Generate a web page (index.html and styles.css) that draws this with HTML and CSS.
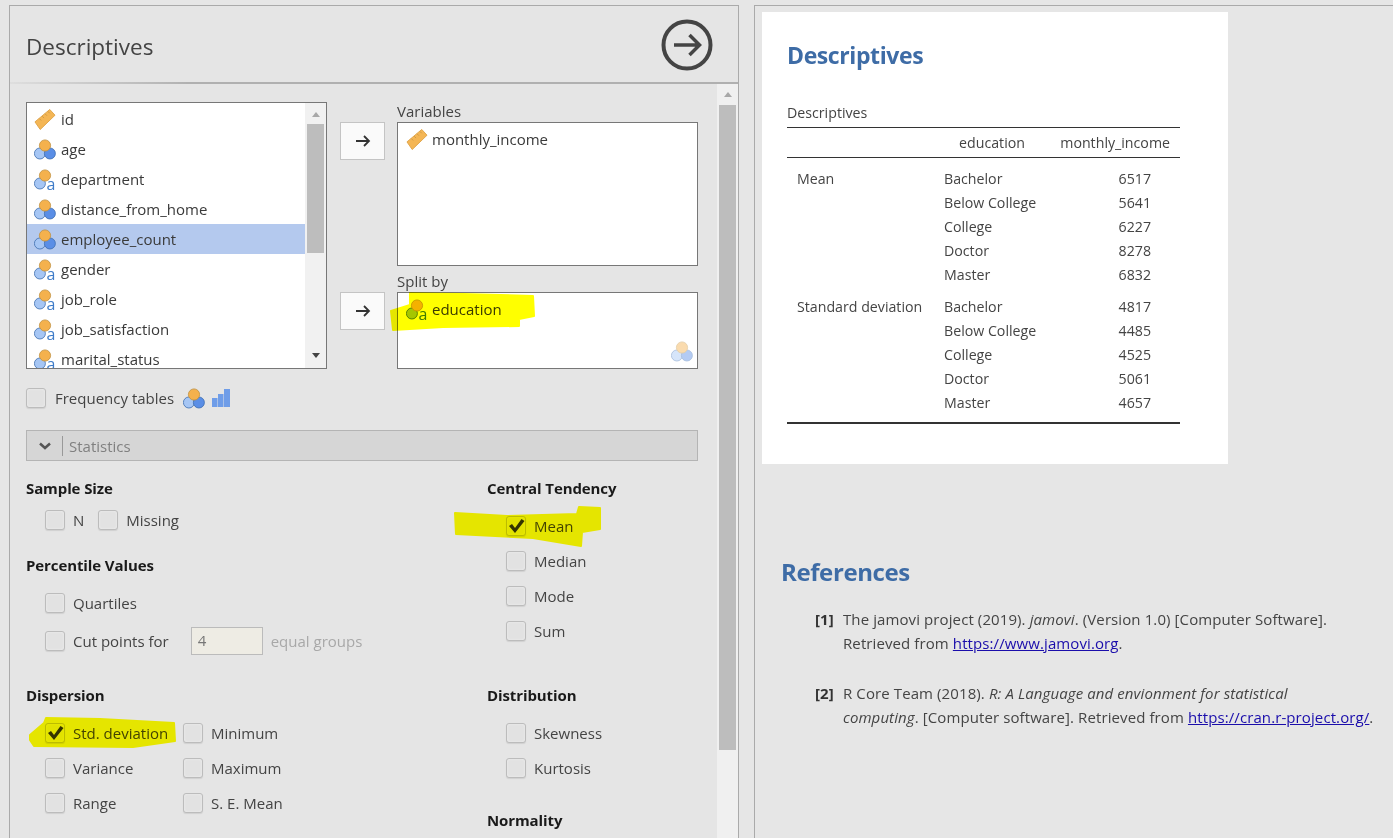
FILE: index.html
```html
<!DOCTYPE html>
<html>
<head>
<meta charset="utf-8"/>
<title>Descriptives</title>
<link rel="stylesheet" href="styles.css">
</head>
<body>

<svg class="defs" width="0" height="0">
  <symbol id="nominal" viewBox="0 0 22 20">
    <circle cx="5.900" cy="14" r="5.500" fill="#a6c6f4" stroke="#3f6fb0" stroke-width="0.800"/>
    <circle cx="15.900" cy="14" r="5.500" fill="#5a8ee6" stroke="#3f6fb0" stroke-width="0.800"/>
    <circle cx="11" cy="6" r="5.600" fill="#f4b14d" stroke="#c0913f" stroke-width="0.800"/>
  </symbol>
  <symbol id="nomtext" viewBox="0 0 22 20">
    <circle cx="5.900" cy="14" r="5.500" fill="#a6c6f4" stroke="#3f6fb0" stroke-width="0.800"/>
    <circle cx="11" cy="6" r="5.600" fill="#f4b14d" stroke="#c0913f" stroke-width="0.800"/>
    <text x="12.500" y="20" font-family="Open Sans, sans-serif" font-size="16" fill="#3f7cc8">a</text>
  </symbol>
  <symbol id="ruler" viewBox="0 0 22 22">
    <path d="M0.500 13.500 L16 0.500 L21.500 6.500 L6 21.500 Z" fill="#f4b655" stroke="#e0a549"/>
    <path d="M5 10 l2 2 M8 7.500 l2 2 M11 5 l2 2 M14 2.500 l2 2" stroke="#cf9a45" fill="none"/>
  </symbol>
  <symbol id="tick" viewBox="0 0 17 16">
    <path d="M1 8 L4 6 L7 10 L13.500 1 L16.500 3 L7 15 Z" fill="#333"/>
  </symbol>
</svg>

<div class="options">
  <div class="opt-header">
    <h1>Descriptives</h1>
    <svg class="go" width="52" height="52" viewBox="0 0 52 52">
      <circle cx="26" cy="26" r="23.500" fill="none" stroke="#444" stroke-width="4"/>
      <path d="M13 26 H38 M28.500 16 L38.500 26 L28.500 36" fill="none" stroke="#444" stroke-width="3.500"/>
    </svg>
  </div>
  <div class="opt-divider"></div>

  <div class="opt-scroll">
    <div class="opt-content">

      <div class="vars">
        <div class="listbox">
          <div class="list-items">
            <div class="item"><svg class="ico"><use href="#ruler"/></svg>id</div>
            <div class="item"><svg class="ico"><use href="#nominal"/></svg>age</div>
            <div class="item"><svg class="ico"><use href="#nomtext"/></svg>department</div>
            <div class="item"><svg class="ico"><use href="#nominal"/></svg>distance_from_home</div>
            <div class="item selected"><svg class="ico"><use href="#nominal"/></svg>employee_count</div>
            <div class="item"><svg class="ico"><use href="#nomtext"/></svg>gender</div>
            <div class="item"><svg class="ico"><use href="#nomtext"/></svg>job_role</div>
            <div class="item"><svg class="ico"><use href="#nomtext"/></svg>job_satisfaction</div>
            <div class="item"><svg class="ico"><use href="#nomtext"/></svg>marital_status</div>
          </div>
          <div class="list-bar">
            <span class="arrow-up"></span>
            <span class="list-thumb"></span>
            <span class="arrow-down"></span>
          </div>
        </div>

        <div class="targets">
          <div class="target-row target-vars">
            <button class="move"><svg width="16" height="14" viewBox="0 0 16 14"><path d="M1 7 H14 M9 2 L14 7 L9 12" fill="none" stroke="#333" stroke-width="1.800"/></svg></button>
            <div class="target-wrap">
              <div class="target-label">Variables</div>
              <div class="target-box tall">
                <div class="item"><svg class="ico"><use href="#ruler"/></svg>monthly_income</div>
              </div>
            </div>
          </div>
          <div class="target-row target-split">
            <button class="move"><svg width="16" height="14" viewBox="0 0 16 14"><path d="M1 7 H14 M9 2 L14 7 L9 12" fill="none" stroke="#333" stroke-width="1.800"/></svg></button>
            <div class="target-wrap">
              <div class="target-label">Split by</div>
              <div class="target-box short">
                <div class="item"><svg class="ico"><use href="#nomtext"/></svg>education</div>
                <svg class="ico faded"><use href="#nominal"/></svg>
              </div>
            </div>
          </div>
        </div>
      </div>

      <div class="freq">
        <span class="cb"></span>
        <span>Frequency tables</span>
        <svg class="ico freq-ico"><use href="#nominal"/></svg>
        <svg class="bars" width="18" height="18" viewBox="0 0 18 18">
          <path d="M0 9 H5.500 V18 H0 Z M6 5 H11.500 V18 H6 Z M12 0 H18 V18 H12 Z" fill="#6f9de8"/>
        </svg>
      </div>

      <div class="collapse-bar">
        <svg width="12" height="8" viewBox="0 0 12 8"><path d="M1 1.500 L6 6 L11 1.500" fill="none" stroke="#555" stroke-width="2.500"/></svg>
        <span class="collapse-sep"></span>
        <span>Statistics</span>
      </div>

      <div class="stats">
        <div class="stats-col">
          <h3>Sample Size</h3>
          <div class="row-inline sample">
            <label class="opt"><span class="cb"></span>N</label>
            <label class="opt"><span class="cb"></span>Missing</label>
          </div>

          <h3 class="percentile">Percentile Values</h3>
          <div class="opts pct-opts">
            <label class="opt"><span class="cb"></span>Quartiles</label>
            <div class="opt cut">
              <span class="cb"></span>Cut points for
              <span class="num-input">4</span>
              <span class="muted">equal groups</span>
            </div>
          </div>

          <h3 class="dispersion">Dispersion</h3>
          <div class="disp-grid">
            <label class="opt"><span class="cb"><svg class="tick"><use href="#tick"/></svg></span>Std. deviation</label>
            <label class="opt"><span class="cb"></span>Minimum</label>
            <label class="opt"><span class="cb"></span>Variance</label>
            <label class="opt"><span class="cb"></span>Maximum</label>
            <label class="opt"><span class="cb"></span>Range</label>
            <label class="opt"><span class="cb"></span>S. E. Mean</label>
          </div>
        </div>

        <div class="stats-col">
          <h3>Central Tendency</h3>
          <div class="opts">
            <label class="opt"><span class="cb"><svg class="tick"><use href="#tick"/></svg></span>Mean</label>
            <label class="opt"><span class="cb"></span>Median</label>
            <label class="opt"><span class="cb"></span>Mode</label>
            <label class="opt"><span class="cb"></span>Sum</label>
          </div>

          <h3 class="distribution">Distribution</h3>
          <div class="opts">
            <label class="opt"><span class="cb"></span>Skewness</label>
            <label class="opt"><span class="cb"></span>Kurtosis</label>
          </div>

          <h3 class="normality">Normality</h3>
        </div>
      </div>
    </div>

    <div class="main-bar">
      <span class="arrow-up"></span>
      <span class="main-thumb"></span>
    </div>
  </div>
</div>

<div class="results">
  <div class="card">
    <h1>Descriptives</h1>
    <table>
      <caption>Descriptives</caption>
      <thead>
        <tr><th class="c1"></th><th class="c2">education</th><th class="c3">monthly_income</th></tr>
      </thead>
      <tbody>
        <tr class="first"><td class="c1">Mean</td><td class="c2">Bachelor</td><td class="c3">6517</td></tr>
        <tr><td></td><td class="c2">Below College</td><td class="c3">5641</td></tr>
        <tr><td></td><td class="c2">College</td><td class="c3">6227</td></tr>
        <tr><td></td><td class="c2">Doctor</td><td class="c3">8278</td></tr>
        <tr><td></td><td class="c2">Master</td><td class="c3">6832</td></tr>
        <tr class="first"><td class="c1">Standard deviation</td><td class="c2">Bachelor</td><td class="c3">4817</td></tr>
        <tr><td></td><td class="c2">Below College</td><td class="c3">4485</td></tr>
        <tr><td></td><td class="c2">College</td><td class="c3">4525</td></tr>
        <tr><td></td><td class="c2">Doctor</td><td class="c3">5061</td></tr>
        <tr class="last"><td></td><td class="c2">Master</td><td class="c3">4657</td></tr>
      </tbody>
    </table>
  </div>

  <div class="refs">
    <h1>References</h1>
    <div class="ref">
      <b>[1]</b>
      <p>The jamovi project (2019). <i>jamovi</i>. (Version 1.0) [Computer Software]. Retrieved from <a href="#">https://www.jamovi.org</a>.</p>
    </div>
    <div class="ref">
      <b>[2]</b>
      <p>R Core Team (2018). <i>R: A Language and envionment for statistical<br>computing</i>. [Computer software]. Retrieved from <a href="#">https://cran.r-project.org/</a>.</p>
    </div>
  </div>
</div>

<!-- marker pen strokes drawn over the screenshot -->
<svg class="marker" width="1393" height="838" viewBox="0 0 1393 838">
  <path d="M391 311 L410 305 L410 293 L463 294 L533 296 L534 316 L519 319 L519 326 L443 327 L393 330 Z"/>
  <path d="M455 513 L507 516 L577 514 L579 507 L600 508 L600 529 L582 532 L581 546 L533 538 L456 534 Z"/>
  <path d="M30 735 L44 723 L46 718 L100 719 L174 723 L175 741 L133 747 L34 746 L30 740 Z"/>
</svg>

</body>
</html>
```

FILE: styles.css
```css
html, body {
  margin: 0;
  height: 100%;
  overflow: hidden;
}

body {
  display: flex;
  background-color: #e6e6e6;
  font-family: "Open Sans", "Noto Sans", sans-serif;
  font-size: 15px;
  color: #444;
}

.defs {
  position: absolute;
}

.ico {
  width: 22px;
  height: 21px;
  flex: none;
}

/* options panel */

.options {
  width: 728px;
  margin: 5px 0 0 9px;
  border: 1px solid #aaa;
  border-bottom: none;
  background-color: #e5e5e5;
  display: flex;
  flex-direction: column;
}

.opt-header {
  height: 76px;
  display: flex;
  align-items: center;
  justify-content: space-between;
  padding: 0 25px 0 16px;
  flex: none;
}

.opt-header h1 {
  margin: 4px 0 0;
  font-size: 22.500px;
  font-weight: 400;
  color: #444;
}

.go {
  margin-top: 2px;
}

.opt-divider {
  height: 2px;
  flex: none;
  background: linear-gradient(to right, #dedede, #b0b0b0 25%);
}

.opt-scroll {
  flex: 1;
  display: flex;
  min-height: 0;
}

.opt-content {
  width: 707px;
  padding: 18px 0 0 16px;
  box-sizing: border-box;
}

.main-bar {
  width: 21px;
  background-color: #f0f0f0;
  display: flex;
  flex-direction: column;
  align-items: center;
}

.main-bar .arrow-up {
  margin: 8px 0 8px;
}

.main-thumb {
  width: 17px;
  height: 645px;
  background-color: #bdbdbd;
}

.arrow-up, .arrow-down {
  width: 0;
  height: 0;
  border-left: 4px solid transparent;
  border-right: 4px solid transparent;
}

.arrow-up {
  border-bottom: 5px solid #a8a8a8;
}

.arrow-down {
  border-top: 5px solid #444;
}

/* variable supplier */

.vars {
  display: flex;
  gap: 13px;
}

.listbox {
  width: 301px;
  height: 267px;
  box-sizing: border-box;
  border: 1px solid #777;
  background-color: white;
  display: flex;
  overflow: hidden;
}

.list-items {
  width: 278px;
  padding-top: 1px;
  flex: none;
}

.item {
  height: 30px;
  display: flex;
  align-items: center;
  gap: 5px;
  padding-left: 7px;
  color: #3a3a3a;
}

.item.selected {
  background-color: #b4c9ee;
}

.list-bar {
  width: 21px;
  background-color: #f1f1f1;
  display: flex;
  flex-direction: column;
  align-items: center;
}

.list-bar .arrow-up {
  margin: 9px 0 7px;
}

.list-thumb {
  width: 17px;
  height: 129px;
  background-color: #bdbdbd;
}

.list-bar .arrow-down {
  margin-top: 100px;
}

.targets {
  display: flex;
  flex-direction: column;
}

.target-row {
  display: flex;
  gap: 12px;
}

.target-split {
  margin-top: 6px;
}

.target-label {
  height: 20px;
  line-height: 18px;
  color: #444;
}

.move {
  width: 45px;
  height: 38px;
  margin-top: 20px;
  padding: 0;
  background-color: #fafafa;
  border: 1px solid #c4c4c4;
  display: flex;
  align-items: center;
  justify-content: center;
}

.target-box {
  width: 301px;
  box-sizing: border-box;
  border: 1px solid #777;
  background-color: white;
  position: relative;
}

.target-box .item {
  padding-left: 8px;
  height: 32px;
  gap: 4px;
}

.target-box.tall {
  height: 144px;
}

.target-box.short {
  height: 77px;
}

.faded {
  position: absolute;
  right: 4px;
  bottom: 6px;
  opacity: 0.45;
}

/* frequency row */

.freq {
  display: flex;
  align-items: center;
  margin-top: 19px;
  height: 20px;
}

.freq .cb {
  margin-right: 9px;
}

.freq-ico {
  margin-left: 9px;
}

.bars {
  margin-left: 7px;
}

/* checkboxes */

.cb {
  width: 20px;
  height: 20px;
  box-sizing: border-box;
  flex: none;
  border: 1px solid #bcbcbc;
  border-radius: 3px;
  background-color: #e2e2e2;
  box-shadow: inset 0 0 2px #f4f4f4, 0 1px 1px #d0d0d0;
  display: inline-block;
  position: relative;
}

.tick {
  position: absolute;
  left: 1px;
  top: 1px;
  width: 17px;
  height: 16px;
}

.opt {
  display: flex;
  align-items: center;
  height: 20px;
  gap: 8px;
}

/* statistics */

.collapse-bar {
  margin-top: 22px;
  width: 672px;
  height: 31px;
  box-sizing: border-box;
  background-color: #d6d6d6;
  border: 1px solid #b4b4b4;
  display: flex;
  align-items: center;
  color: #808080;
  padding-left: 12px;
}

.collapse-sep {
  width: 1px;
  height: 20px;
  background-color: #999;
  margin: 0 6px 0 11px;
}

.stats {
  display: grid;
  grid-template-columns: 461px 1fr;
  padding-top: 17px;
}

h3 {
  margin: 0;
  height: 20px;
  line-height: 20px;
  font-size: 15px;
  font-weight: 700;
  letter-spacing: -0.1px;
  color: #1a1a1a;
}

.opts {
  display: flex;
  flex-direction: column;
  gap: 15px;
  padding: 18px 0 0 19px;
}

.row-inline {
  display: flex;
  padding-left: 19px;
}

.sample {
  margin-top: 12px;
  gap: 14px;
}

.percentile {
  margin-top: 25px;
}

.pct-opts {
  gap: 14px;
}

.cut {
  height: 28px;
}

.num-input {
  width: 72px;
  height: 28px;
  box-sizing: border-box;
  margin-left: 14px;
  border: 1px solid #bbb;
  background-color: #eeece4;
  color: #777;
  padding-left: 6px;
  line-height: 24px;
}

.muted {
  color: #a8a8a8;
}

.dispersion {
  margin-top: 30px;
}

.disp-grid {
  display: grid;
  grid-template-columns: 138px 1fr;
  row-gap: 15px;
  padding: 18px 0 0 19px;
}

.distribution {
  margin-top: 44px;
}

.normality {
  margin-top: 32px;
}

/* results panel */

.results {
  flex: 1;
  margin: 5px 0 0 15px;
  border: 1px solid #aaa;
  border-width: 1px 0 0 1px;
  padding: 6px 0 0 7px;
}

.results h1 {
  margin: 0;
  font-size: 23px;
  font-weight: 700;
  letter-spacing: -0.4px;
  color: #3e6ca6;
}

.card {
  width: 466px;
  height: 452px;
  box-sizing: border-box;
  background-color: white;
  padding: 26px 0 0 25px;
}

.card h1 {
  line-height: 34px;
}

table {
  width: 393px;
  margin-top: 28px;
  border-collapse: collapse;
  table-layout: fixed;
  font-size: 14.200px;
  color: #444;
}

caption {
  text-align: left;
  height: 27px;
  line-height: 26px;
}

th {
  font-weight: 400;
  height: 29px;
  padding: 0;
  border-top: 1px solid #333;
  border-bottom: 1px solid #333;
}

td {
  height: 24px;
  padding: 0;
}

.c1 {
  width: 147px;
  padding-left: 10px;
  box-sizing: border-box;
}

th.c1 {
  padding: 0;
}

.c2 {
  width: 116px;
  padding-left: 10px;
  box-sizing: border-box;
  text-align: left;
}

th.c2 {
  padding: 0;
  text-align: center;
}

.c3 {
  text-align: right;
  padding-right: 29px;
}

th.c3 {
  padding-right: 10px;
}

tr.first td {
  padding-top: 8px;
}

tr.last td {
  padding-bottom: 8px;
  border-bottom: 2px solid #333;
}

.refs {
  margin: 91px 0 0 19px;
}

.refs h1 {
  font-size: 24px;
  line-height: 34px;
}

.ref {
  display: flex;
  width: 566px;
  margin: 18px 0 26px 34px;
  color: #444;
  line-height: 24px;
  letter-spacing: 0.1px;
}

.ref b {
  width: 28px;
  flex: none;
  color: #333;
}

.ref p {
  margin: 0;
}

.ref a {
  color: #1a0dab;
  white-space: nowrap;
}

/* highlighter */

.marker {
  position: absolute;
  left: 0;
  top: 0;
  mix-blend-mode: multiply;
  pointer-events: none;
}

.marker path {
  fill: #ffff00;
  stroke: #ffff00;
  stroke-width: 2;
  stroke-linejoin: round;
}
```
